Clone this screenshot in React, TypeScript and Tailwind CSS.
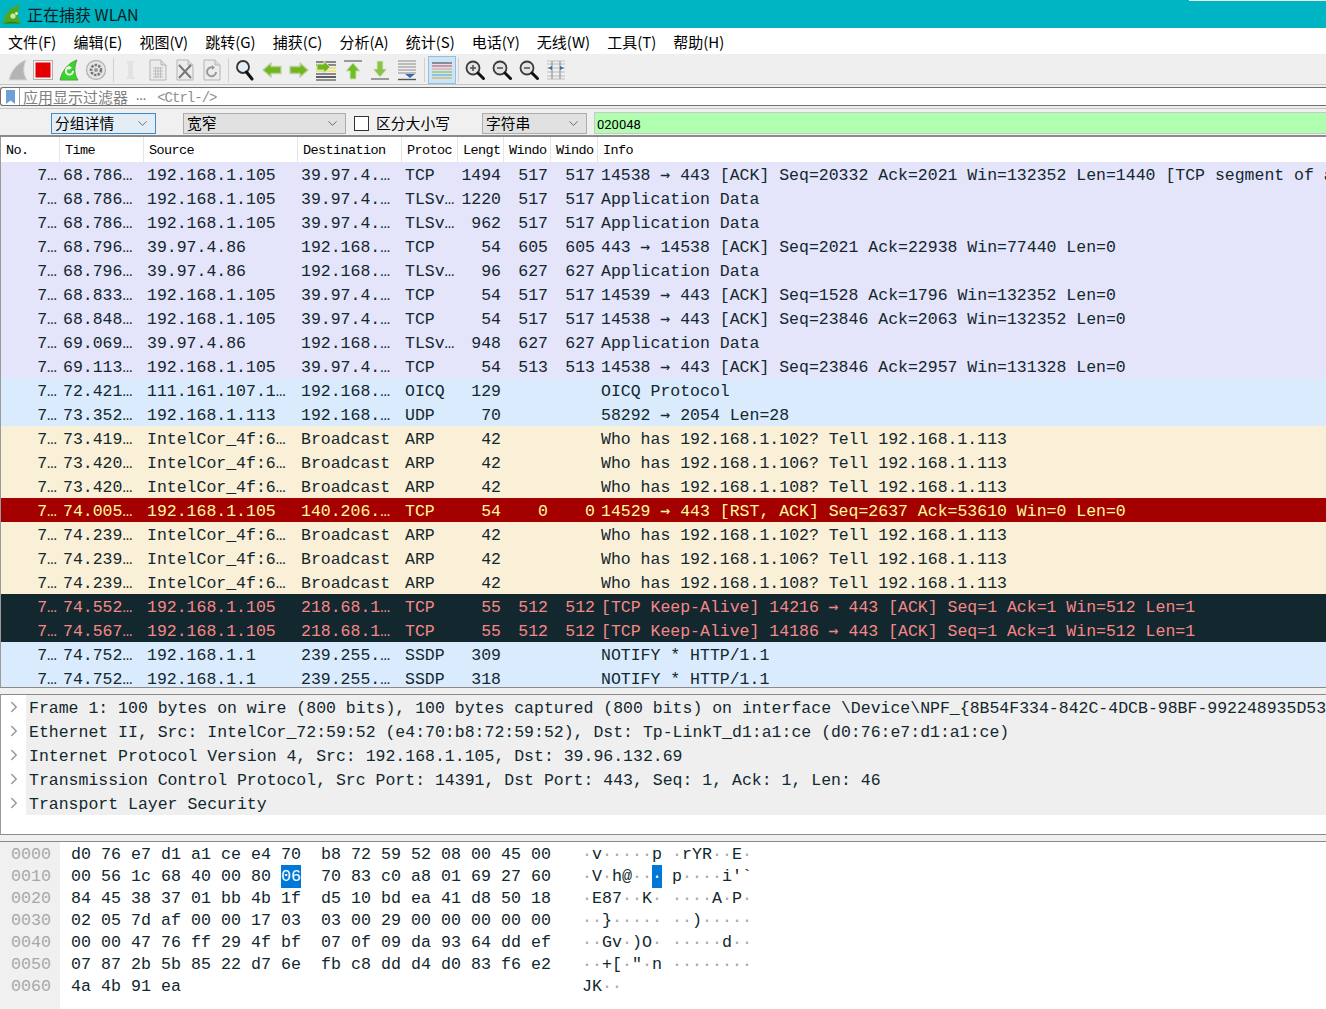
import React from "react";
import { ChevronDown, ChevronRight } from "lucide-react";

const MONO = "font-['Liberation_Mono','DejaVu_Sans_Mono',monospace]";
const CJK = "font-['Noto_Sans_CJK_SC','Noto_Sans',sans-serif]";

const menus = ["文件(F)", "编辑(E)", "视图(V)", "跳转(G)", "捕获(C)", "分析(A)", "统计(S)", "电话(Y)", "无线(W)", "工具(T)", "帮助(H)"];

const themes = {
  lav: "bg-[#e4e4fb] text-[#12272e]",
  blue: "bg-[#d9ebfd] text-[#12272e]",
  tan: "bg-[#faf0d7] text-[#12272e]",
  red: "bg-[#a40000] text-[#fffc9c]",
  dark: "bg-[#12272e] text-[#f78787]",
};

type Row = [string, string, string, string, string, string, string, keyof typeof themes];

const HOST = "192.168.1.105";
const who = (n: string) => `Who has 192.168.1.${n}? Tell 192.168.1.113`;

const rows: Row[] = [
  ["68.786…", HOST, "39.97.4.…", "TCP", "1494", "517", "14538 → 443 [ACK] Seq=20332 Ack=2021 Win=132352 Len=1440 [TCP segment of a", "lav"],
  ["68.786…", HOST, "39.97.4.…", "TLSv…", "1220", "517", "Application Data", "lav"],
  ["68.786…", HOST, "39.97.4.…", "TLSv…", "962", "517", "Application Data", "lav"],
  ["68.796…", "39.97.4.86", "192.168.…", "TCP", "54", "605", "443 → 14538 [ACK] Seq=2021 Ack=22938 Win=77440 Len=0", "lav"],
  ["68.796…", "39.97.4.86", "192.168.…", "TLSv…", "96", "627", "Application Data", "lav"],
  ["68.833…", HOST, "39.97.4.…", "TCP", "54", "517", "14539 → 443 [ACK] Seq=1528 Ack=1796 Win=132352 Len=0", "lav"],
  ["68.848…", HOST, "39.97.4.…", "TCP", "54", "517", "14538 → 443 [ACK] Seq=23846 Ack=2063 Win=132352 Len=0", "lav"],
  ["69.069…", "39.97.4.86", "192.168.…", "TLSv…", "948", "627", "Application Data", "lav"],
  ["69.113…", HOST, "39.97.4.…", "TCP", "54", "513", "14538 → 443 [ACK] Seq=23846 Ack=2957 Win=131328 Len=0", "lav"],
  ["72.421…", "111.161.107.1…", "192.168.…", "OICQ", "129", "", "OICQ Protocol", "blue"],
  ["73.352…", "192.168.1.113", "192.168.…", "UDP", "70", "", "58292 → 2054 Len=28", "blue"],
  ["73.419…", "IntelCor_4f:6…", "Broadcast", "ARP", "42", "", who("102"), "tan"],
  ["73.420…", "IntelCor_4f:6…", "Broadcast", "ARP", "42", "", who("106"), "tan"],
  ["73.420…", "IntelCor_4f:6…", "Broadcast", "ARP", "42", "", who("108"), "tan"],
  ["74.005…", HOST, "140.206.…", "TCP", "54", "0", "14529 → 443 [RST, ACK] Seq=2637 Ack=53610 Win=0 Len=0", "red"],
  ["74.239…", "IntelCor_4f:6…", "Broadcast", "ARP", "42", "", who("102"), "tan"],
  ["74.239…", "IntelCor_4f:6…", "Broadcast", "ARP", "42", "", who("106"), "tan"],
  ["74.239…", "IntelCor_4f:6…", "Broadcast", "ARP", "42", "", who("108"), "tan"],
  ["74.552…", HOST, "218.68.1…", "TCP", "55", "512", "[TCP Keep-Alive] 14216 → 443 [ACK] Seq=1 Ack=1 Win=512 Len=1", "dark"],
  ["74.567…", HOST, "218.68.1…", "TCP", "55", "512", "[TCP Keep-Alive] 14186 → 443 [ACK] Seq=1 Ack=1 Win=512 Len=1", "dark"],
  ["74.752…", "192.168.1.1", "239.255.…", "SSDP", "309", "", "NOTIFY * HTTP/1.1", "blue"],
  ["74.752…", "192.168.1.1", "239.255.…", "SSDP", "318", "", "NOTIFY * HTTP/1.1", "blue"],
];

const details = [
  "Frame 1: 100 bytes on wire (800 bits), 100 bytes captured (800 bits) on interface \\Device\\NPF_{8B54F334-842C-4DCB-98BF-992248935D53",
  "Ethernet II, Src: IntelCor_72:59:52 (e4:70:b8:72:59:52), Dst: Tp-LinkT_d1:a1:ce (d0:76:e7:d1:a1:ce)",
  "Internet Protocol Version 4, Src: 192.168.1.105, Dst: 39.96.132.69",
  "Transmission Control Protocol, Src Port: 14391, Dst Port: 443, Seq: 1, Ack: 1, Len: 46",
  "Transport Layer Security",
];

const hex: [string, string, string, string, string][] = [
  ["0000", "d0 76 e7 d1 a1 ce e4 70", "b8 72 59 52 08 00 45 00", "·v·····p", "·rYR··E·"],
  ["0010", "00 56 1c 68 40 00 80 06", "70 83 c0 a8 01 69 27 60", "·V·h@···", "p····i'`"],
  ["0020", "84 45 38 37 01 bb 4b 1f", "d5 10 bd ea 41 d8 50 18", "·E87··K·", "····A·P·"],
  ["0030", "02 05 7d af 00 00 17 03", "03 00 29 00 00 00 00 00", "··}·····", "··)·····"],
  ["0040", "00 00 47 76 ff 29 4f bf", "07 0f 09 da 93 64 dd ef", "··Gv·)O·", "·····d··"],
  ["0050", "07 87 2b 5b 85 22 d7 6e", "fb c8 dd d4 d0 83 f6 e2", "··+[·\"·n", "········"],
  ["0060", "4a 4b 91 ea", "", "JK··", ""],
];

const Fin = ({ fill, stroke }: { fill: string; stroke: string }) => (
  <path d="M1 21 C3 12 9 4 18 1 C15 8 15 15 19 21 Z" fill={fill} stroke={stroke} strokeWidth="1" />
);

const Lens = ({ sign }: { sign?: "+" | "-" }) => (
  <svg width="22" height="22" viewBox="0 0 22 22">
    <circle cx="9" cy="9" r="6.5" fill="#e4e4e4" stroke="#3a3a3a" strokeWidth="1.8" />
    <path d="M14 14 L19.5 19.5" stroke="#111" strokeWidth="3" strokeLinecap="round" />
    {sign && <path d="M6 9 H12" stroke="#555" strokeWidth="1.6" />}
    {sign === "+" && <path d="M9 6 V12" stroke="#555" strokeWidth="1.6" />}
  </svg>
);

const Doc = ({ children }: { children?: React.ReactNode }) => (
  <svg width="20" height="22" viewBox="0 0 20 22">
    <path d="M2 1 H13 L18 6 V21 H2 Z" fill="#ececec" stroke="#b5b5b5" />
    <path d="M13 1 V6 H18" fill="#dcdcdc" stroke="#b5b5b5" />
    {children}
  </svg>
);

const Arrow = ({ dir }: { dir: "l" | "r" }) => (
  <svg width="20" height="16" viewBox="0 0 20 16">
    <path
      d={dir === "l" ? "M1 8 L9 1 V4.5 H19 V11.5 H9 V15 Z" : "M19 8 L11 1 V4.5 H1 V11.5 H11 V15 Z"}
      fill="#6fb51c"
      stroke="#bcd0a0"
      strokeWidth="1.4"
      strokeLinejoin="round"
    />
  </svg>
);

const Lines = ({ colors }: { colors: string[] }) => (
  <>
    {colors.map((c, i) => (
      <path key={i} d={`M1 ${3 + i * 3} H21`} stroke={c} strokeWidth="1.2" />
    ))}
  </>
);

const ToolIcon = ({ w = "w-[27px]", children }: { w?: string; children: React.ReactNode }) => (
  <div className={`${w} h-[28px] flex items-center justify-center shrink-0`}>{children}</div>
);

const Sep = ({ w }: { w: string }) => (
  <div className={`${w} h-[24px] flex justify-center shrink-0`}>
    <div className="w-px h-full bg-[#d0d0d0]" />
  </div>
);

const Toolbar = () => (
  <div className="h-[29px] bg-[#efefef] flex items-center pl-[5px]">
    <ToolIcon w="w-[25px]">
      <svg width="20" height="22" viewBox="0 0 20 22"><Fin fill="#b4b4b4" stroke="#d8d8d8" /></svg>
    </ToolIcon>
    <ToolIcon w="w-[25px]">
      <svg width="20" height="20" viewBox="0 0 20 20">
        <rect x="0.5" y="0.5" width="19" height="19" fill="#f4f4f4" stroke="#b0b0b0" />
        <rect x="2.5" y="2.5" width="15" height="15" fill="#e40000" />
      </svg>
    </ToolIcon>
    <ToolIcon>
      <svg width="20" height="22" viewBox="0 0 20 22">
        <Fin fill="#35d629" stroke="#5b9e45" />
        <path d="M14 12 A3.6 3.6 0 1 1 10.5 8.5" fill="none" stroke="#fff" strokeWidth="1.8" />
        <path d="M9.5 6.5 L13 8.7 L9.5 11 Z" fill="#fff" />
      </svg>
    </ToolIcon>
    <ToolIcon>
      <svg width="22" height="22" viewBox="0 0 22 22">
        <circle cx="11" cy="11" r="9.5" fill="#e6e6e6" stroke="#b5b5b5" strokeWidth="1.4" />
        <circle cx="11" cy="11" r="5" fill="none" stroke="#777" strokeWidth="2.6" strokeDasharray="2.4 1.2" />
        <circle cx="11" cy="11" r="2" fill="#999" />
      </svg>
    </ToolIcon>
    <Sep w="w-[8px]" />
    <ToolIcon>
      <svg width="14" height="20" viewBox="0 0 14 20">
        <path d="M2 1 H11 L9 5 V15 L11 19 H2 L4 15 V5 Z" fill="#e3e3e3" />
      </svg>
    </ToolIcon>
    <ToolIcon>
      <Doc>
        <path d="M5 9 H15 M5 12 H15 M5 15 H15 M5 18 H15 M7.5 8 V19 M10 8 V19 M12.5 8 V19" stroke="#bdbdbd" />
      </Doc>
    </ToolIcon>
    <ToolIcon>
      <Doc>
        <path d="M4 6 L16 19 M16 6 L4 19" stroke="#777" strokeWidth="2" />
      </Doc>
    </ToolIcon>
    <ToolIcon>
      <Doc>
        <path d="M14 13 A4.5 4.5 0 1 1 11 8.5" fill="none" stroke="#999" strokeWidth="2" />
        <path d="M10 6 L13 8.5 L10 11 Z" fill="#999" />
      </Doc>
    </ToolIcon>
    <Sep w="w-[6px]" />
    <ToolIcon>
      <svg width="20" height="22" viewBox="0 0 20 22">
        <circle cx="8" cy="8" r="6" fill="#e4edf5" stroke="#333" strokeWidth="1.8" />
        <path d="M11.5 13 L17 20" stroke="#111" strokeWidth="3" strokeLinecap="round" />
      </svg>
    </ToolIcon>
    <ToolIcon><Arrow dir="l" /></ToolIcon>
    <ToolIcon><Arrow dir="r" /></ToolIcon>
    <ToolIcon>
      <svg width="22" height="22" viewBox="0 0 22 22">
        <Lines colors={["#444", "#444", "#eed340", "#eed340", "#444", "#444"]} />
        <path d="M1 18 H21 M1 21 H21" stroke="#333" strokeWidth="1.2" />
        <path d="M15 8 L9 2 V5 H2 V11 H9 V14 Z" fill="#6fb51c" stroke="#cfe0b8" />
      </svg>
    </ToolIcon>
    <ToolIcon>
      <svg width="20" height="22" viewBox="0 0 20 22">
        <path d="M1 2 H19" stroke="#9a9a9a" strokeWidth="2" />
        <path d="M10 4 L17 12 H13 V20 H7 V12 H3 Z" fill="#6fbe25" stroke="#cfe0b8" />
      </svg>
    </ToolIcon>
    <ToolIcon>
      <svg width="20" height="22" viewBox="0 0 20 22">
        <path d="M1 20 H19" stroke="#9a9a9a" strokeWidth="2" />
        <path d="M10 18 L17 10 H13 V2 H7 V10 H3 Z" fill="#8ac24a" stroke="#d8e6c4" />
      </svg>
    </ToolIcon>
    <ToolIcon>
      <svg width="20" height="22" viewBox="0 0 20 22">
        <path d="M1 2 H19 M1 5 H19 M1 8 H19 M1 11 H19 M1 14 H19" stroke="#8a8a8a" />
        <path d="M1 20.5 H19" stroke="#555" strokeWidth="1.4" />
        <path d="M8 15 H18 L13 19 Z" fill="#2f6db5" />
      </svg>
    </ToolIcon>
    <Sep w="w-[8px]" />
    <div className="w-[28px] h-[28px] bg-[#cde4f7] border border-[#92c0e0] flex items-center justify-center shrink-0">
      <svg width="22" height="20" viewBox="0 0 22 20">
        <Lines colors={["#555", "#e45a5a", "#e9a0a0", "#8ec63f", "#6ca6d8", "#d6b24a", "#555"]} />
      </svg>
    </div>
    <Sep w="w-[5px]" />
    <ToolIcon><Lens sign="+" /></ToolIcon>
    <ToolIcon><Lens sign="-" /></ToolIcon>
    <ToolIcon><Lens sign="-" /></ToolIcon>
    <ToolIcon>
      <svg width="20" height="20" viewBox="0 0 20 20">
        <path d="M1 1 H19 M1 4 H19 M1 8 H19 M1 12 H19 M1 16 H19 M1 19 H19" stroke="#bdbdbd" />
        <path d="M6 1 V19 M14 1 V19" stroke="#888" />
        <path d="M6 6 L2 8 L6 10 Z M14 6 L18 8 L14 10 Z" fill="#2f6db5" />
      </svg>
    </ToolIcon>
  </div>
);

const FilterBar = () => (
  <div className="h-[24px] bg-[#efefef] border-t border-[#c6c6c6] pt-[2px]">
    <div className="h-[19px] bg-white border border-[#6e6e6e] border-r-0 rounded-l-[3px] flex items-center">
      <div className="w-[19px] h-full flex items-center justify-center border-r border-[#a0a0a0] shrink-0">
        <svg width="9" height="14" viewBox="0 0 9 14">
          <path d="M0 0 H9 V14 L4.5 10.5 L0 14 Z" fill="#6f9fd8" />
        </svg>
      </div>
      <span className={`${CJK} text-[15px] text-[#808080] ml-[3px] leading-none`}>应用显示过滤器</span>
      <span className={`${MONO} text-[17px] text-[#808080] ml-[8px] leading-none pb-[2px]`}>…</span>
      <span className={`${MONO} text-[14px] tracking-[-1px] text-[#909090] ml-[11px] leading-none pt-[2px]`}>{"<Ctrl-/>"}</span>
    </div>
  </div>
);

const Combo = ({ label, w, active }: { label: string; w: string; active?: boolean }) => (
  <div
    className={`${w} h-[21px] flex items-center justify-between border pl-[3px] pr-[5px] shrink-0 ${
      active ? "bg-[#e3edf5] border-[#3c8ccc]" : "bg-[#e1e1e1] border-[#adadad]"
    }`}
  >
    <span className={`${CJK} text-[14.8px] leading-none text-black`}>{label}</span>
    <ChevronDown size={15} strokeWidth={1.2} className="text-[#444]" />
  </div>
);

const FindBar = () => (
  <div className="h-[29px] bg-[#f0f0f0] border-t border-[#c6c6c6] border-b-2 border-b-[#8a8a8a] flex items-center pl-[51px] pt-[2px]">
    <Combo label="分组详情" w="w-[105px]" active />
    <div className="w-[27px] shrink-0" />
    <Combo label="宽窄" w="w-[163px]" />
    <div className="w-[15px] h-[15px] bg-white border border-[#333] ml-[8px] shrink-0" />
    <span className={`${CJK} text-[14.8px] leading-none text-black ml-[7px] w-[106px] shrink-0`}>区分大小写</span>
    <Combo label="字符串" w="w-[105px]" />
    <div className="ml-[7px] flex-1 h-[22px] bg-[#afffaf] border border-[#c8c8c8] border-r-0 flex items-center pl-[2px] pt-[2px]">
      <span className="font-['Roboto',sans-serif] text-[13px] leading-none text-black">020048</span>
    </div>
  </div>
);

const cols = ["w-[59px]", "w-[84px]", "w-[154px]", "w-[104px]", "w-[56px]", "w-[46px]", "w-[47px]", "w-[47px]"];

const Header = () => {
  const labels = ["No.", "Time", "Source", "Destination", "Protoc", "Lengt", "Windo", "Windo", "Info"];
  return (
    <div className={`${MONO} h-[25px] flex text-[13.5px] tracking-[-0.6px] text-black bg-white items-center`}>
      {labels.map((l, i) => (
        <div
          key={i}
          className={`${cols[i] ?? "flex-1"} h-full flex items-center pt-[4px] pl-[5px] overflow-hidden shrink-0 ${i < 8 ? "border-r border-[#e5e5e5]" : ""}`}
        >
          {l}
        </div>
      ))}
    </div>
  );
};

// the arrow in Liberation Mono is too thin, DejaVu's one has the right weight
const InfoText = ({ text }: { text: string }) => {
  const parts = text.split("→");
  if (parts.length === 1) return <>{text}</>;
  return (
    <>
      {parts[0]}
      <span className="font-['DejaVu_Sans_Mono',monospace] text-[16.4px]">→</span>
      {parts[1]}
    </>
  );
};

const PacketRow = ({ r }: { r: Row }) => {
  const [time, src, dst, proto, len, win, info, theme] = r;
  return (
    <div className={`${themes[theme]} h-[24px] pt-[4px] flex items-center whitespace-nowrap shrink-0`}>
      <div className="w-[57px] text-right pr-[1px] shrink-0">7…</div>
      <div className="w-[84px] pl-[5px] shrink-0">{time}</div>
      <div className="w-[154px] pl-[5px] shrink-0">{src}</div>
      <div className="w-[104px] pl-[5px] shrink-0">{dst}</div>
      <div className="w-[56px] pl-[5px] shrink-0">{proto}</div>
      <div className="w-[46px] text-right pr-[1px] shrink-0">{len}</div>
      <div className="w-[47px] text-right pr-[1px] shrink-0">{win}</div>
      <div className="w-[47px] text-right pr-[1px] shrink-0">{win}</div>
      <div className="pl-[5px]">
        <InfoText text={info} />
      </div>
    </div>
  );
};

const Ascii = ({ text, sel }: { text: string; sel?: number }) => (
  <span className="whitespace-pre">
    {text.split("").map((c, i) =>
      i === sel ? (
        <span key={i} className="bg-[#0078d7] text-white py-[2px]">{c}</span>
      ) : c === "·" ? (
        <span key={i} className="text-[#a8a8a8]">{c}</span>
      ) : (
        <span key={i}>{c}</span>
      ),
    )}
  </span>
);

export default function App() {
  return (
    <div className="relative w-[1326px] h-[1009px] overflow-hidden bg-white flex flex-col">
      <div className="absolute top-0 right-0 w-[137px] h-px bg-[#f0f0f0]" />

      <div className="h-[28px] bg-[#00b5c3] flex items-center pl-[3px] pb-[1px] shrink-0">
        <svg width="18" height="20" viewBox="0 0 18 20">
          <path d="M0 19.5 C1 10 7 3 17 0.5 C14 7 14 14 18 19.5 Z" fill="#4ea81f" />
          <path d="M0 19.5 C5 17 12 17 18 19.5 Z" fill="#2e7d16" />
          <circle cx="10" cy="12" r="2.6" fill="#c8e8b0" />
          <circle cx="13.5" cy="9.5" r="1.4" fill="#e5f5d8" />
        </svg>
        <span className={`${CJK} text-[16px] leading-none text-[#0b1a1c] ml-[6px]`}>正在捕获 WLAN</span>
      </div>

      <div className={`${CJK} h-[27px] bg-white border-b border-[#eeeeee] flex items-center pl-[8px] gap-[17px] text-[15px] leading-none text-black shrink-0`}>
        {menus.map((m) => (
          <span key={m} className="whitespace-nowrap">{m}</span>
        ))}
      </div>

      <Toolbar />
      <FilterBar />
      <FindBar />

      <div className="h-[551px] border-l border-[#9a9a9a] border-b border-b-[#8a8a8a] overflow-hidden shrink-0">
        <Header />
        <div className={`${MONO} text-[16.5px] leading-none`}>
          {rows.map((r, i) => (
            <PacketRow key={i} r={r} />
          ))}
        </div>
      </div>

      <div className="h-[6px] bg-[#f0f0f0] shrink-0" />

      <div className={`${MONO} h-[141px] bg-white border-y border-[#8a8a8a] border-l border-l-[#9a9a9a] text-[16.5px] leading-none text-[#12272e] shrink-0 overflow-hidden`}>
        {details.map((d) => (
          <div key={d} className="h-[24px] flex items-center whitespace-nowrap">
            <div className="w-[25px] flex justify-center shrink-0">
              <ChevronRight size={18} strokeWidth={2} className="text-[#999]" />
            </div>
            <div className="flex-1 h-full bg-[#efefef] flex items-center pl-[3px] pt-[4px]">{d}</div>
          </div>
        ))}
      </div>

      <div className="h-[6px] bg-[#f0f0f0] shrink-0" />

      <div className={`${MONO} flex-1 border-t border-[#8a8a8a] flex text-[16.67px] leading-none text-[#12272e]`}>
        <div className="w-[60px] bg-[#f0f0f0] pl-[11px] text-[#a8a8a8] shrink-0">
          {hex.map((h) => (
            <div key={h[0]} className="h-[22px] pt-[4px] flex items-center">{h[0]}</div>
          ))}
        </div>
        <div className="pl-[11px]">
          {hex.map((h, i) => (
            <div key={h[0]} className="h-[22px] pt-[4px] flex items-center whitespace-pre">
              <span className="w-[250px] shrink-0">
                {i === 1 ? (
                  <>
                    00 56 1c 68 40 00 80 <span className="bg-[#0078d7] text-white py-[2px]">06</span>
                  </>
                ) : (
                  h[1]
                )}
              </span>
              <span className="w-[261px] shrink-0">{h[2]}</span>
              <span className="w-[90px] shrink-0">
                <Ascii text={h[3]} sel={i === 1 ? 7 : undefined} />
              </span>
              <Ascii text={h[4]} />
            </div>
          ))}
        </div>
      </div>
    </div>
  );
}
